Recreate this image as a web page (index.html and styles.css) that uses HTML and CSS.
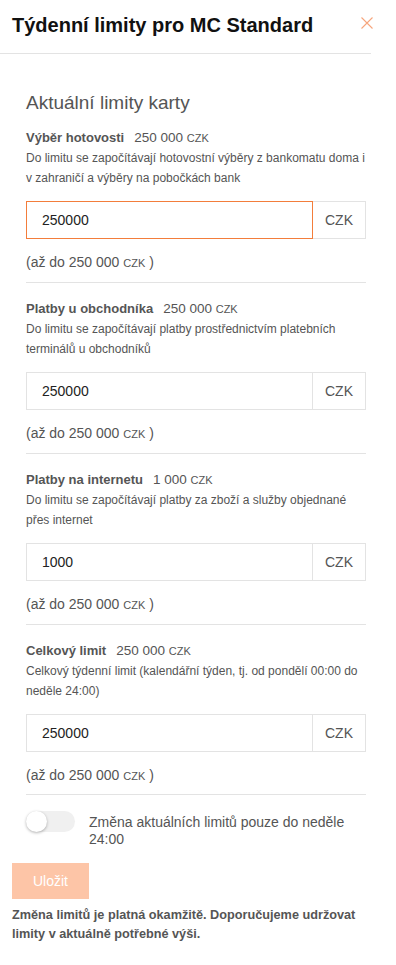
FILE: index.html
```html
<!DOCTYPE html>
<html lang="cs">
<head>
<meta charset="utf-8">
<title>Týdenní limity pro MC Standard</title>
<link rel="stylesheet" href="styles.css">
</head>
<body>
<div class="panel">
  <header class="head">
    <h1 class="title">Týdenní limity pro MC Standard</h1>
    <svg class="close" width="12" height="12" viewBox="0 0 12 12" aria-label="Zavřít">
      <path d="M0.5 0.5 L11.5 11.5 M11.5 0.5 L0.5 11.5" stroke="#f6a57c" stroke-width="1.1" fill="none"/>
    </svg>
  </header>
  <div class="body">
    <div class="content">
      <h2 class="subtitle">Aktuální limity karty</h2>

      <section class="limit">
        <div class="label"><b>Výběr hotovosti</b><span class="val">250 000 <small>CZK</small></span></div>
        <p class="desc">Do limitu se započítávají hotovostní výběry z bankomatu doma i v zahraničí a výběry na pobočkách bank</p>
        <div class="field focus"><div class="input">250000</div><div class="addon">CZK</div></div>
        <p class="help">(až do 250 000 <small>CZK</small> )</p>
      </section>

      <section class="limit">
        <div class="label"><b>Platby u obchodníka</b><span class="val">250 000 <small>CZK</small></span></div>
        <p class="desc">Do limitu se započítávají platby prostřednictvím platebních terminálů u obchodníků</p>
        <div class="field"><div class="input">250000</div><div class="addon">CZK</div></div>
        <p class="help">(až do 250 000 <small>CZK</small> )</p>
      </section>

      <section class="limit">
        <div class="label"><b>Platby na internetu</b><span class="val">1 000 <small>CZK</small></span></div>
        <p class="desc">Do limitu se započítávají platby za zboží a služby objednané přes internet</p>
        <div class="field"><div class="input">1000</div><div class="addon">CZK</div></div>
        <p class="help">(až do 250 000 <small>CZK</small> )</p>
      </section>

      <section class="limit">
        <div class="label"><b>Celkový limit</b><span class="val">250 000 <small>CZK</small></span></div>
        <p class="desc">Celkový týdenní limit (kalendářní týden, tj. od pondělí 00:00 do neděle 24:00)</p>
        <div class="field"><div class="input">250000</div><div class="addon">CZK</div></div>
        <p class="help">(až do 250 000 <small>CZK</small> )</p>
      </section>

      <div class="toggle-row">
        <span class="toggle"><span class="knob"></span></span>
        <span class="toggle-text">Změna aktuálních limitů pouze do neděle 24:00</span>
      </div>
    </div>
    <button class="save" type="button">Uložit</button>
    <p class="note">Změna limitů je platná okamžitě. Doporučujeme udržovat limity v aktuálně potřebné výši.</p>
  </div>
</div>
</body>
</html>
```

FILE: styles.css
```css
* { box-sizing: border-box; }
html, body { margin: 0; padding: 0; background: #fff; }
body {
  font-family: "Liberation Sans", Arial, Helvetica, sans-serif;
  color: #555;
}
.panel { width: 371px; }
.head {
  display: flex;
  justify-content: space-between;
  align-items: flex-start;
  padding: 13px 0 16px 12px;
  border-bottom: 1px solid #e3e3e3;
}
.title {
  margin: 0;
  font-size: 20px;
  line-height: 24px;
  font-weight: bold;
  color: #111;
}
.close { margin-top: 4px; margin-right: -2px; flex: none; }
.body { padding: 0 0 20px 12px; }
.content { padding: 37px 5px 0 14px; }
.subtitle {
  margin: 0 0 13px;
  font-size: 19px;
  line-height: 24px;
  font-weight: normal;
  color: #555;
}
.limit {
  border-bottom: 1px solid #e3e3e3;
  padding-bottom: 10px;
  margin-bottom: 16px;
}
.limit:last-of-type { padding-bottom: 9px; }
.label { font-size: 13px; line-height: 20px; }
.label b { font-weight: bold; color: #555; }
.val { margin-left: 10px; font-size: 13.5px; }
small { font-size: 11px; line-height: 1; }
.desc {
  margin: 0;
  font-size: 12px;
  line-height: 20px;
  color: #555;
}
.field {
  display: flex;
  height: 38px;
  margin-top: 13px;
}
.input {
  flex: 1;
  border: 1px solid #e3e3e3;
  padding-left: 15px;
  font-size: 14px;
  line-height: 36px;
  color: #222;
}
.field.focus .input { border-color: #f37d3b; }
.addon {
  width: 53px;
  border: 1px solid #e3e3e3;
  border-left: none;
  text-align: center;
  font-size: 14px;
  line-height: 36px;
  color: #555;
}
.help {
  margin: 13px 0 0;
  font-size: 14px;
  line-height: 20px;
  color: #555;
}
.toggle-row {
  display: flex;
  align-items: flex-start;
  gap: 14px;
}
.toggle {
  flex: none;
  position: relative;
  width: 49px;
  height: 21px;
  border-radius: 11px;
  background: #f0f0f0;
}
.knob {
  position: absolute;
  left: 0;
  top: 0;
  width: 21px;
  height: 21px;
  border-radius: 50%;
  background: #fff;
  box-shadow: 0 1px 3px rgba(0,0,0,0.3);
}
.toggle-text {
  padding-top: 3px;
  font-size: 14px;
  line-height: 17px;
  color: #555;
}
.save {
  display: block;
  margin-top: 15px;
  width: 77px;
  height: 36px;
  border: none;
  background: #fdc5a7;
  color: #fff;
  font-family: inherit;
  font-size: 14px;
  padding: 0;
}
.note {
  margin: 7px 0 0;
  font-size: 12.7px;
  line-height: 19px;
  font-weight: bold;
  color: #555;
}
```
